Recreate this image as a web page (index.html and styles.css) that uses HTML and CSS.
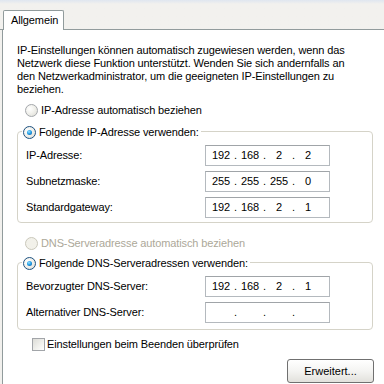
FILE: index.html
```html
<!DOCTYPE html>
<html lang="de">
<head>
<meta charset="utf-8">
<link rel="stylesheet" href="styles.css">
</head>
<body>
<div class="tabbar">
  <div class="tab">Allgemein</div>
</div>
<div class="panel">
  <p class="intro">IP-Einstellungen können automatisch zugewiesen werden, wenn das Netzwerk diese Funktion unterstützt. Wenden Sie sich andernfalls an den Netzwerkadministrator, um die geeigneten IP-Einstellungen zu beziehen.</p>

  <div class="opt opt-first"><span class="radio"></span><span>IP-Adresse automatisch beziehen</span></div>

  <div class="group">
    <div class="legend"><span class="radio on"></span><span>Folgende IP-Adresse verwenden:</span></div>
    <div class="row"><span class="lbl">IP-Adresse:</span><div class="ip"><span>192</span><i>.</i><span>168</span><i>.</i><span>2</span><i>.</i><span>2</span></div></div>
    <div class="row"><span class="lbl">Subnetzmaske:</span><div class="ip"><span>255</span><i>.</i><span>255</span><i>.</i><span>255</span><i>.</i><span>0</span></div></div>
    <div class="row"><span class="lbl">Standardgateway:</span><div class="ip"><span>192</span><i>.</i><span>168</span><i>.</i><span>2</span><i>.</i><span>1</span></div></div>
  </div>

  <div class="opt opt-dns disabled"><span class="radio dis"></span><span>DNS-Serveradresse automatisch beziehen</span></div>

  <div class="group group2">
    <div class="legend"><span class="radio on"></span><span>Folgende DNS-Serveradressen verwenden:</span></div>
    <div class="row"><span class="lbl">Bevorzugter DNS-Server:</span><div class="ip"><span>192</span><i>.</i><span>168</span><i>.</i><span>2</span><i>.</i><span>1</span></div></div>
    <div class="row"><span class="lbl">Alternativer DNS-Server:</span><div class="ip"><span></span><i>.</i><span></span><i>.</i><span></span><i>.</i><span></span></div></div>
  </div>

  <div class="check"><span class="box"></span><span>Einstellungen beim Beenden überprüfen</span></div>

  <div class="actions"><button class="btn">Erweitert...</button></div>
</div>
</body>
</html>
```

FILE: styles.css
```css
* { box-sizing: border-box; }
html, body { margin: 0; height: 100%; }
body {
  font-family: "Liberation Sans", Arial, sans-serif;
  font-size: 11px;
  line-height: 13px;
  letter-spacing: -0.12px;
  color: #000;
  background: linear-gradient(#dfe6f0 0, #f2f1ee 4px, #f1f0ed 100%);
  display: flex;
  flex-direction: column;
  overflow: hidden;
}
.tabbar {
  height: 30px;
  padding: 10px 0 0 3px;
  display: flex;
  border-bottom: 1px solid #919b9c;
  flex: none;
}
.tab {
  width: 61px;
  height: 20px;
  background: #fff;
  border: 1px solid #919b9c;
  border-bottom: none;
  border-radius: 2px 2px 0 0;
  padding: 3px 0 0 7px;
  margin-bottom: -1px;
  position: relative;
  z-index: 1;
}
.panel {
  flex: 1;
  margin-left: 2px;
  background: #fff;
  border-left: 1px solid #919b9c;
  padding: 14px 0 0 14px;
  display: flex;
  flex-direction: column;
}
.intro { margin: 0; width: 340px; }
.opt {
  display: flex;
  align-items: center;
  gap: 3px;
  height: 14px;
}
.opt-first { margin: 7px 0 0 8px; }
.opt-dns { margin: 13px 0 0 8px; }
.disabled { color: #aca899; }
.radio {
  width: 13px;
  height: 13px;
  border-radius: 50%;
  border: 1px solid #1c5180;
  background: radial-gradient(circle at 35% 35%, #fff 0, #f3f3ef 40%, #dcdbd3 100%);
  flex: none;
  position: relative;
}
.opt .radio { border-color: #a4a7ab; }
.radio.dis { border-color: #cac8bb; background: #f2f1ea; }
.radio.on::after {
  content: "";
  position: absolute;
  left: 3px; top: 3px;
  width: 5px; height: 5px;
  border-radius: 50%;
  background: radial-gradient(circle at 40% 35%, #9fe0ff 0, #21a1e8 45%, #0a4e9b 100%);
}
.group {
  margin-top: 14px;
  width: 356px;
  border: 1px solid #d5d3c8;
  border-radius: 4px;
  padding: 0 0 4px 8px;
  display: flex;
  flex-direction: column;
  gap: 5px;
}
.group2 { margin-top: 12px; padding-bottom: 6px; }
.legend {
  display: flex;
  align-items: center;
  gap: 3px;
  width: fit-content;
  background: #fff;
  margin: -7px 0 1px -4px;
  padding: 0 2px 0 1px;
  height: 14px;
}
.row {
  display: flex;
  align-items: center;
  justify-content: space-between;
  width: 304px;
  height: 21px;
}
.ip {
  width: 125px;
  height: 21px;
  border: 1px solid #b4b9be;
  border-top-color: #a0a4a8;
  padding-left: 4px;
  display: flex;
  align-items: center;
}
.ip span { width: 22px; text-align: center; }
.ip i { font-style: normal; width: 7px; text-align: center; }
.check {
  display: flex;
  align-items: center;
  gap: 2px;
  margin: 8px 0 0 15px;
  height: 13px;
}
.box {
  width: 13px;
  height: 13px;
  border: 1px solid #a2a5a9;
  background: linear-gradient(135deg, #dcdcd7 0, #f5f5f2 70%, #fff 100%);
  flex: none;
}
.actions {
  display: flex;
  justify-content: flex-end;
  width: 357px;
  margin-top: 8px;
}
.btn {
  font: inherit;
  width: 87px;
  height: 24px;
  border: 1px solid #707070;
  border-radius: 3px;
  background: linear-gradient(#ffffff 0, #f4f4f2 50%, #e2e1dc 100%);
  color: #000;
  padding: 0;
}
```
